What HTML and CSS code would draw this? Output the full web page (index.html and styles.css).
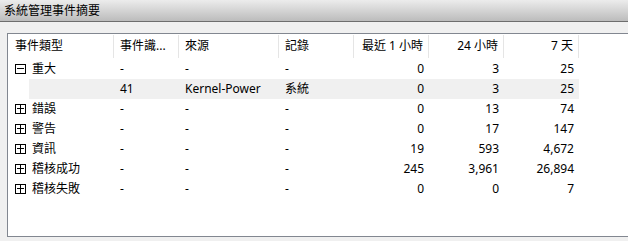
FILE: index.html
```html
<!DOCTYPE html>
<html lang="zh-Hant">
<head>
    <meta charset="UTF-8">
    <title>系統管理事件摘要</title>
    <link rel="stylesheet" href="styles.css">
</head>
<body>
    <div class="title-bar">系統管理事件摘要</div>
    <div class="content">
        <div class="list-view">
            <div class="row header">
                <div class="cell">事件類型</div>
                <div class="cell">事件識...</div>
                <div class="cell">來源</div>
                <div class="cell">記錄</div>
                <div class="cell num">最近 1 小時</div>
                <div class="cell num">24 小時</div>
                <div class="cell num">7 天</div>
            </div>
            <div class="row">
                <div class="cell"><span class="expander minus"></span>重大</div>
                <div class="cell">-</div>
                <div class="cell">-</div>
                <div class="cell">-</div>
                <div class="cell num">0</div>
                <div class="cell num">3</div>
                <div class="cell num">25</div>
            </div>
            <div class="row child">
                <div class="cell"></div>
                <div class="cell">41</div>
                <div class="cell">Kernel-Power</div>
                <div class="cell">系統</div>
                <div class="cell num">0</div>
                <div class="cell num">3</div>
                <div class="cell num">25</div>
            </div>
            <div class="row">
                <div class="cell"><span class="expander plus"></span>錯誤</div>
                <div class="cell">-</div>
                <div class="cell">-</div>
                <div class="cell">-</div>
                <div class="cell num">0</div>
                <div class="cell num">13</div>
                <div class="cell num">74</div>
            </div>
            <div class="row">
                <div class="cell"><span class="expander plus"></span>警告</div>
                <div class="cell">-</div>
                <div class="cell">-</div>
                <div class="cell">-</div>
                <div class="cell num">0</div>
                <div class="cell num">17</div>
                <div class="cell num">147</div>
            </div>
            <div class="row">
                <div class="cell"><span class="expander plus"></span>資訊</div>
                <div class="cell">-</div>
                <div class="cell">-</div>
                <div class="cell">-</div>
                <div class="cell num">19</div>
                <div class="cell num">593</div>
                <div class="cell num">4,672</div>
            </div>
            <div class="row">
                <div class="cell"><span class="expander plus"></span>稽核成功</div>
                <div class="cell">-</div>
                <div class="cell">-</div>
                <div class="cell">-</div>
                <div class="cell num">245</div>
                <div class="cell num">3,961</div>
                <div class="cell num">26,894</div>
            </div>
            <div class="row">
                <div class="cell"><span class="expander plus"></span>稽核失敗</div>
                <div class="cell">-</div>
                <div class="cell">-</div>
                <div class="cell">-</div>
                <div class="cell num">0</div>
                <div class="cell num">0</div>
                <div class="cell num">7</div>
            </div>
        </div>
    </div>
</body>
</html>
```

FILE: styles.css
```css
body {
    font-family: "Noto Sans", "Noto Sans CJK TC", sans-serif;
    font-size: 12px;
    color: #000;
    background-color: #f0f0f0;
    margin: 0;
    padding: 0;
    overflow: hidden;
}

.title-bar {
    height: 21px;
    line-height: 21px;
    padding-left: 4px;
    background: linear-gradient(180deg, #ececec, #bcbcbc);
    border-bottom: 1px solid #6e6e6e;
    white-space: nowrap;
}

.content {
    padding: 11px 0 0 7px;
}

/* list continues past the right edge of the window, so no right border */
.list-view {
    height: 202px;
    background: #fff;
    border: 1px solid #828790;
    border-right: none;
}

.row {
    display: grid;
    grid-template-columns: 106px 65px 100px 75px 75px 75px 75px;
    width: 571px;
    height: 20px;
    align-items: center;
}

.row.header {
    height: 25px;
    align-items: stretch;
}

.row.header .cell {
    display: flex;
    align-items: center;
    margin: 1px 0 1px;
    border-right: 1px solid #e5e5e5;
    padding-bottom: 1px;
}

.row.header .cell.num {
    justify-content: flex-end;
}

.row.child {
    margin-left: 21px;
    width: 550px;
    grid-template-columns: 85px 65px 100px 75px 75px 75px 75px;
    background: #f0f0f0;
}

.cell {
    padding: 0 6px;
    white-space: nowrap;
    overflow: hidden;
    line-height: 20px;
}

.row .cell:first-child {
    padding-left: 7px;
    display: flex;
    align-items: center;
}

.cell.num {
    text-align: right;
    padding-right: 5px;
}

.expander {
    position: relative;
    box-sizing: border-box;
    width: 11px;
    height: 10px;
    border: 1px solid #000;
    margin-right: 6px;
    flex-shrink: 0;
}

.expander::before {
    content: "";
    position: absolute;
    left: 1px;
    right: 1px;
    top: 3px;
    height: 1px;
    background: #000;
}

.expander.plus::after {
    content: "";
    position: absolute;
    left: 4px;
    top: 0;
    bottom: 0;
    width: 1px;
    background: #000;
}
```
